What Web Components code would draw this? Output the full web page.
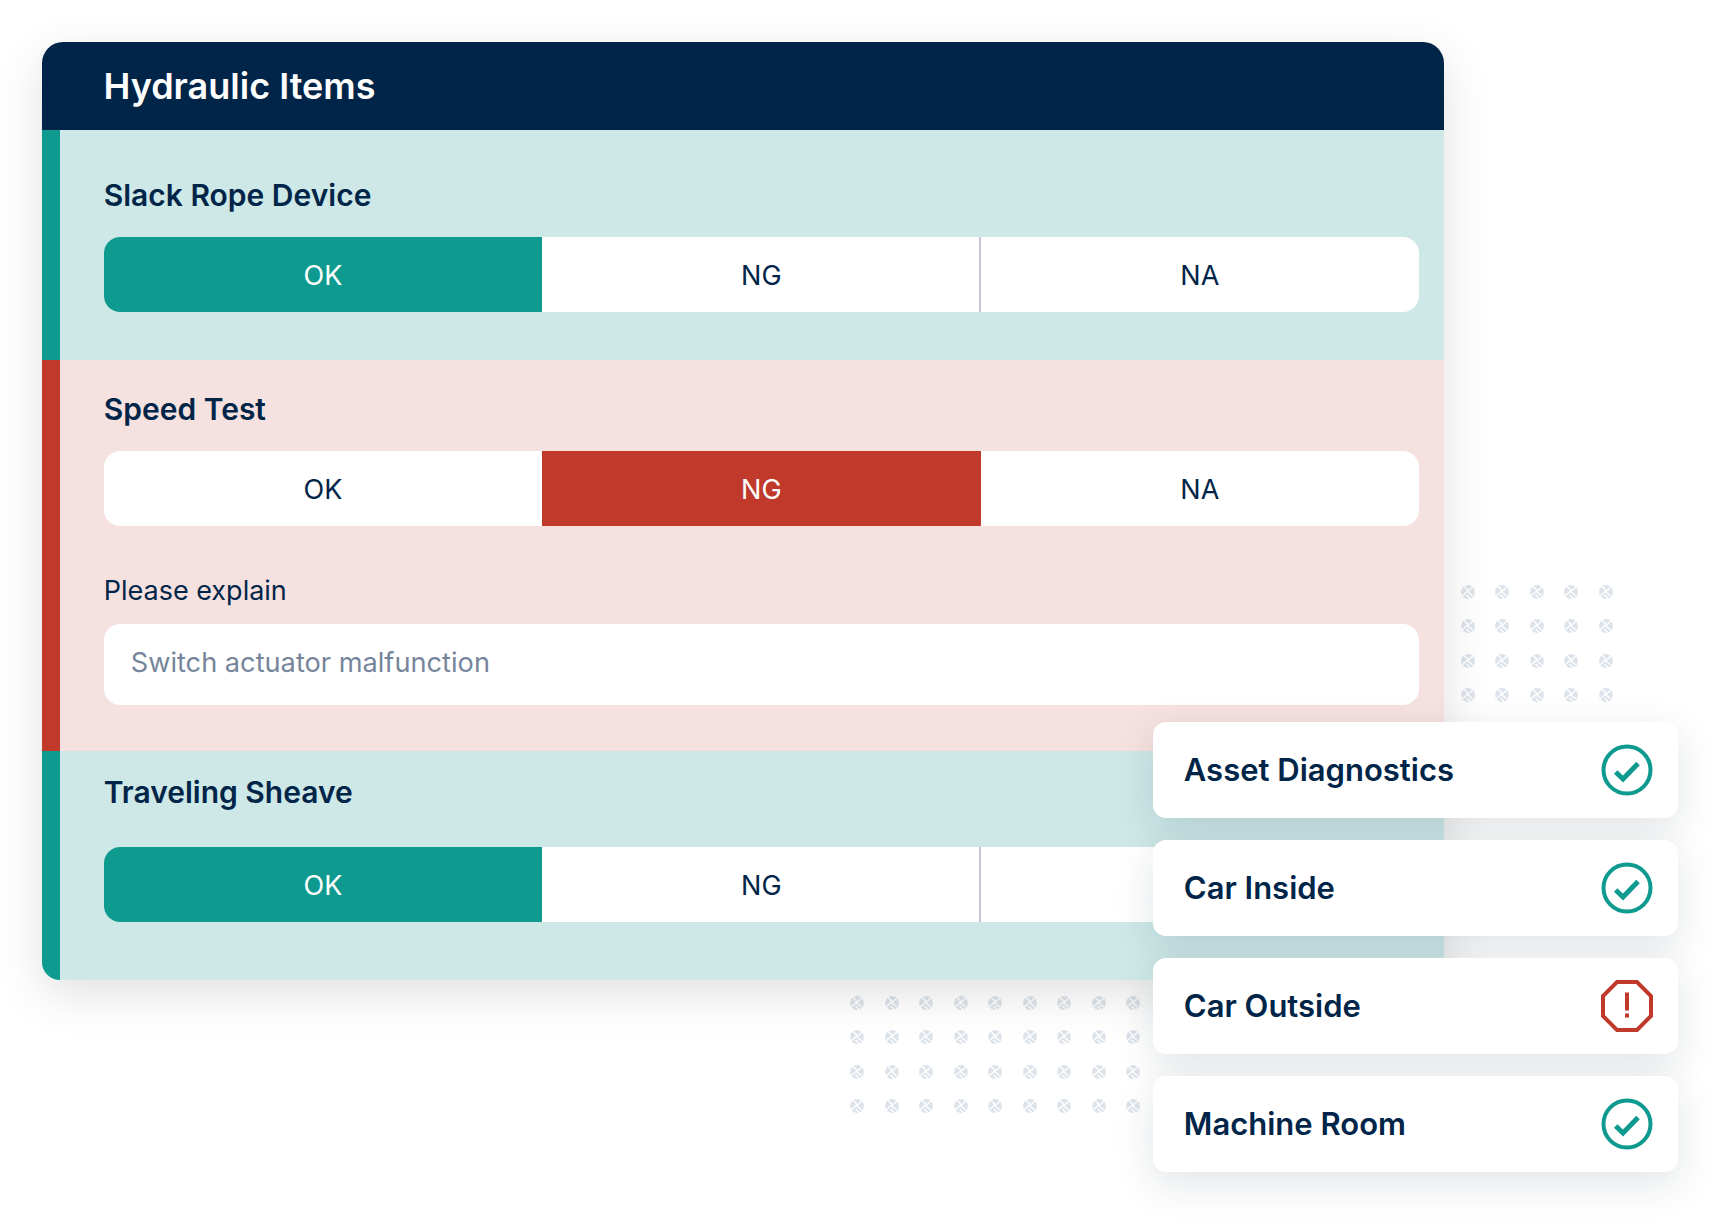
<!DOCTYPE html>
<html lang="en">

<head>
    <meta charset="UTF-8" />
    <title>Hydraulic Items</title>
    <style>
        html,
        body {
            margin: 0;
            background: white;
            font-family: "Inter", "Liberation Sans", sans-serif;
            color: #012548;
        }

        .canvas {
            position: relative;
            width: 1730px;
            height: 1227px;
            padding: 42px 285.7px 0 42px;
            box-sizing: border-box;
            overflow: hidden;
        }

        .canvas dot-grid.right { left: 1460.5px; top: 584.5px; }
        .canvas dot-grid.bottom { left: 850px; top: 995.5px; }
        .canvas status-list { left: 1153.3px; top: 721.5px; }
    </style>
</head>

<body>
    <div class="canvas">
        <dot-grid class="right" cols="5" rows="4"></dot-grid>
        <dot-grid class="bottom" cols="9" rows="4"></dot-grid>

        <inspection-card heading="Hydraulic Items">
            <check-section heading="Slack Rope Device" state="ok" style="--top: 47px; --gap: 24px; --bottom: 48px">
                <segment-group selected="OK"></segment-group>
            </check-section>
            <check-section heading="Speed Test" state="ng" style="--top: 31px; --gap: 24px; --bottom: 46px">
                <segment-group selected="NG"></segment-group>
                <explain-field label="Please explain" value="Switch actuator malfunction"></explain-field>
            </check-section>
            <check-section heading="Traveling Sheave" state="ok" style="--top: 23px; --gap: 37px; --bottom: 58px">
                <!-- the last label sits under the status cards -->
                <segment-group selected="OK" labels="OK,NG,"></segment-group>
            </check-section>
        </inspection-card>

        <status-list>
            <status-card label="Asset Diagnostics" status="ok"></status-card>
            <status-card label="Car Inside" status="ok"></status-card>
            <status-card label="Car Outside" status="alert"></status-card>
            <status-card label="Machine Room" status="ok"></status-card>
        </status-list>
    </div>

    <script>
        class InspectionCard extends HTMLElement {
            constructor() {
                super();
                const shadow = this.attachShadow({ mode: 'open' });
                shadow.innerHTML = `
                <style>
                    :host {
                        display: block;
                        position: relative;
                        border-radius: 21px 21px 18px 18px;
                        box-shadow: 0 14px 48px rgba(0, 0, 0, .12);
                    }
                    .frame {
                        border-radius: inherit;
                        overflow: hidden;
                    }
                    header {
                        height: 88px;
                        padding-left: 61.5px;
                        background: #012548;
                        color: white;
                        font-size: 36px;
                        font-weight: 600;
                        line-height: 88px;
                    }
                </style>
                <div class="frame">
                    <header>${this.getAttribute('heading')}</header>
                    <slot></slot>
                </div>
            `;
            }
        }

        class CheckSection extends HTMLElement {
            constructor() {
                super();
                const shadow = this.attachShadow({ mode: 'open' });
                shadow.innerHTML = `
                <style>
                    :host {
                        display: block;
                        padding: var(--top) 25.3px var(--bottom) 43.7px;
                        border-left: 18px solid #0e9a8e;
                        background: #cde8e7;
                    }
                    :host([state="ng"]) {
                        border-left-color: #c0392b;
                        background: #f5e1df;
                    }
                    h3 {
                        margin: 0 0 var(--gap);
                        color: #012548;
                        font-size: 30px;
                        font-weight: 600;
                        line-height: 36px;
                    }
                </style>
                <h3>${this.getAttribute('heading')}</h3>
                <slot></slot>
            `;
            }
        }

        class SegmentGroup extends HTMLElement {
            constructor() {
                super();
                const selected = this.getAttribute('selected');
                const labels = (this.getAttribute('labels') || 'OK,NG,NA').split(',');
                const names = ['OK', 'NG', 'NA'];
                const shadow = this.attachShadow({ mode: 'open' });
                const buttons = names.map((name, i) =>
                    `<div class="segment ${name === selected ? 'on ' + name : ''}">${labels[i]}</div>`).join('');
                shadow.innerHTML = `
                <style>
                    :host {
                        display: grid;
                        grid-template-columns: repeat(3, 1fr);
                        height: 75px;
                        border-radius: 16px;
                        overflow: hidden;
                        background: white;
                    }
                    .segment {
                        position: relative;
                        display: flex;
                        align-items: center;
                        justify-content: center;
                        padding-top: 2px;
                        box-sizing: border-box;
                        color: #012548;
                        font-size: 27px;
                    }
                    .on { color: white; }
                    .on.OK { background: #0e9a8e; }
                    .on.NG { background: #c0392b; }
                    .on.OK ~ .segment:last-child::before {
                        content: "";
                        position: absolute;
                        left: -2px;
                        top: 0;
                        bottom: 0;
                        width: 2px;
                        background: #c3c7d6;
                    }
                </style>
                ${buttons}
            `;
            }
        }

        class ExplainField extends HTMLElement {
            constructor() {
                super();
                const shadow = this.attachShadow({ mode: 'open' });
                shadow.innerHTML = `
                <style>
                    :host { display: block; }
                    label {
                        display: block;
                        margin: 48px 0 16px;
                        color: #012548;
                        font-size: 27px;
                        line-height: 34px;
                    }
                    .box {
                        height: 81px;
                        padding-left: 27px;
                        border-radius: 16px;
                        background: white;
                        color: #76859b;
                        font-size: 27.2px;
                        line-height: 77px;
                    }
                </style>
                <label>${this.getAttribute('label')}</label>
                <div class="box">${this.getAttribute('value')}</div>
            `;
            }
        }

        class StatusList extends HTMLElement {
            constructor() {
                super();
                const shadow = this.attachShadow({ mode: 'open' });
                shadow.innerHTML = `
                <style>
                    :host {
                        position: absolute;
                        display: flex;
                        flex-direction: column;
                        gap: 21.5px;
                        width: 525px;
                    }
                </style>
                <slot></slot>
            `;
            }
        }

        class StatusCard extends HTMLElement {
            constructor() {
                super();
                const icons = {
                    ok: `<svg viewBox="0 0 52 52" width="52" height="52" fill="none">
                            <circle cx="26" cy="26" r="23.5" stroke="#0e9a8e" stroke-width="4" />
                            <path d="M14.7 28 L22 35 L37 19.5" stroke="#0e9a8e" stroke-width="5" />
                        </svg>`,
                    alert: `<svg viewBox="0 0 52 52" width="52" height="52" fill="none">
                            <path d="M16 2 H36 L50 16 V36 L36 50 H16 L2 36 V16 Z" stroke="#c0392b" stroke-width="4" />
                            <rect x="24" y="12.5" width="4" height="18" fill="#c0392b" />
                            <rect x="24" y="33.5" width="4" height="4" fill="#c0392b" />
                        </svg>`
                };
                const shadow = this.attachShadow({ mode: 'open' });
                shadow.innerHTML = `
                <style>
                    :host {
                        display: flex;
                        align-items: center;
                        justify-content: space-between;
                        height: 96.5px;
                        padding: 0 25px 0 30.5px;
                        box-sizing: border-box;
                        border-radius: 13px;
                        background: white;
                        box-shadow: 0 12px 40px rgba(0, 30, 50, .12);
                        color: #012548;
                        font-size: 31px;
                        font-weight: 600;
                    }
                    svg { display: block; }
                </style>
                <span>${this.getAttribute('label')}</span>
                ${icons[this.getAttribute('status')]}
            `;
            }
        }

        class DotGrid extends HTMLElement {
            constructor() {
                super();
                const cols = Number(this.getAttribute('cols'));
                const rows = Number(this.getAttribute('rows'));
                const dot = `<svg viewBox="0 0 14 14" width="14" height="14">
                        <circle cx="7" cy="7" r="6.9" fill="#dde3ea" />
                        <path d="M2.5 1 L7.2 5.5 L1 11 M12.5 1.5 L6.7 6.8 L11.8 11 M5.5 10 L9.5 14" stroke="white" stroke-width="1.4" fill="none" />
                    </svg>`;
                const shadow = this.attachShadow({ mode: 'open' });
                shadow.innerHTML = `
                <style>
                    :host {
                        position: absolute;
                        display: grid;
                        grid-template-columns: repeat(${cols}, 14px);
                        gap: 20.5px;
                    }
                    svg { display: block; }
                </style>
                ${dot.repeat(cols * rows)}
            `;
            }
        }

        customElements.define('inspection-card', InspectionCard);
        customElements.define('check-section', CheckSection);
        customElements.define('segment-group', SegmentGroup);
        customElements.define('explain-field', ExplainField);
        customElements.define('status-list', StatusList);
        customElements.define('status-card', StatusCard);
        customElements.define('dot-grid', DotGrid);
    </script>

</body>

</html>
